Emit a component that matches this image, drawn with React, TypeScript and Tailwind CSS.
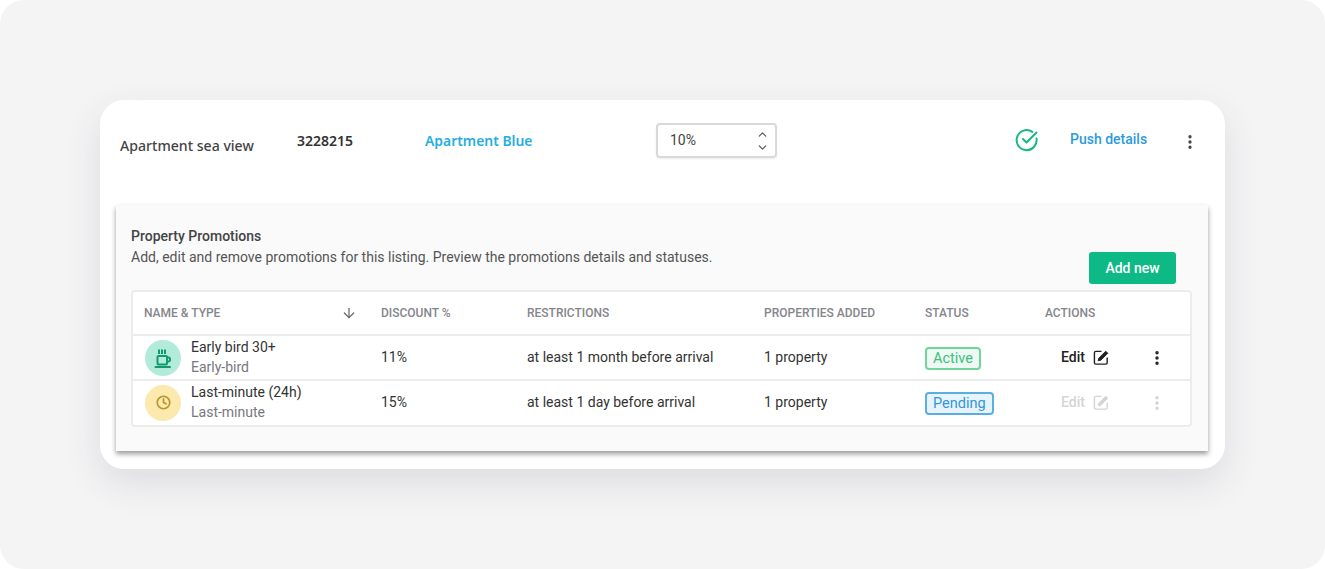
import { ArrowDown, ChevronDown, ChevronUp, Clock, EllipsisVertical } from 'lucide-react';

const COLS = 'grid grid-cols-[248px_146px_237px_161px_120px_1fr] items-center';

interface Promotion {
  name: string;
  type: string;
  discount: string;
  restriction: string;
  properties: string;
  status: string;
  statusClass: string;
  iconClass: string;
  icon: React.ReactNode;
  disabled: boolean;
}

function CoffeeIcon() {
  return (
    <svg viewBox="0 0 24 24" className="h-[24px] w-[24px] fill-none stroke-[#139a6c] stroke-2">
      <path d="M8 3.500v4.500M11 3.500v4.500M14 3.500v4.500" />
      <rect x="6.500" y="10" width="9.500" height="8.500" rx="1" />
      <path d="M16 11.500h1.500a1.500 1.500 0 0 1 1.500 1.500v1a1.500 1.500 0 0 1-1.500 1.500H16" />
      <path d="M4.500 21h14.500" strokeLinecap="round" />
    </svg>
  );
}

function EditIcon() {
  return (
    <svg viewBox="0 0 18 18" className="h-[17px] w-[17px] fill-none stroke-current">
      <path d="M9 2.500H3a1.500 1.500 0 0 0-1.500 1.500v10.500A1.500 1.500 0 0 0 3 16h10.500a1.500 1.500 0 0 0 1.500-1.500V9" strokeWidth="1.500" />
      <path d="M5.500 12.500l.6-2.800 7.400-7.400 2.200 2.200-7.400 7.400z" fill="currentColor" strokeWidth="1" strokeLinejoin="round" />
    </svg>
  );
}

const promotions: Promotion[] = [
  {
    name: 'Early bird 30+',
    type: 'Early-bird',
    discount: '11%',
    restriction: 'at least 1 month before arrival',
    properties: '1 property',
    status: 'Active',
    statusClass: 'border-[#6fd69b] bg-[#edf9f2] text-[#3cc07c]',
    iconClass: 'bg-[#b2ebda]',
    icon: <CoffeeIcon />,
    disabled: false,
  },
  {
    name: 'Last-minute (24h)',
    type: 'Last-minute',
    discount: '15%',
    restriction: 'at least 1 day before arrival',
    properties: '1 property',
    status: 'Pending',
    statusClass: 'border-[#5aaee3] bg-[#e8f4fc] text-[#2f96dc]',
    iconClass: 'bg-[#fbe9ad]',
    icon: <Clock size={15} strokeWidth={2.7} className="text-[#b8962a]" />,
    disabled: true,
  },
];

function PromotionRow({ item }: { item: Promotion }) {
  const actionColor = item.disabled ? 'text-[#d4d4d4]' : 'text-[#222222]';
  return (
    <div className={`${COLS} h-[45px] border-t-2 border-[#ececec] text-[14px] text-[#333333]`}>
      <div className="flex items-center pl-[12px]">
        <div className={`flex h-[36px] w-[36px] items-center justify-center rounded-full ${item.iconClass}`}>
          {item.icon}
        </div>
        <div className="-mt-[2px] ml-[10px] leading-[20px]">
          <div className="text-[#333333]">{item.name}</div>
          <div className="text-[#77777f]">{item.type}</div>
        </div>
      </div>
      <div>{item.discount}</div>
      <div>{item.restriction}</div>
      <div>{item.properties}</div>
      <div>
        <span className={`mt-[1px] inline-block h-[23px] rounded-[4px] border-2 px-[6px] text-[14.5px] leading-[19px] ${item.statusClass}`}>
          {item.status}
        </span>
      </div>
      <div className={`flex items-center pl-[16px] ${actionColor}`}>
        <span className="w-[32px] font-medium">Edit</span>
        <EditIcon />
        <EllipsisVertical size={18} strokeWidth={2.6} className="ml-[38px]" />
      </div>
    </div>
  );
}

export default function App() {
  return (
    <div className="h-[569px] w-[1325px] overflow-hidden bg-white font-['Roboto',sans-serif]">
      <div className="h-full rounded-[24px] bg-[#f4f4f5] pl-[100px] pt-[100px]">
        <div className="h-[369px] w-[1125px] rounded-[24px] bg-white px-[16px] shadow-[0_14px_36px_rgba(60,60,70,0.12)]">
          <div className="flex h-[105px] items-start font-['Noto_Sans',sans-serif] text-[14px]">
            <div className="ml-[4px] mt-[35px] w-[177px] text-[14.1px] font-medium text-[#444444]">Apartment sea view</div>
            <div className="mt-[30px] w-[128px] font-semibold text-[#333333]">3228215</div>
            <div className="mt-[31px] w-[231px] text-[13.9px] font-semibold text-[#25aede]">Apartment Blue</div>
            <div className="mt-[23px] flex h-[35px] w-[121px] items-center justify-between rounded-[4px] border-2 border-[#d9d9d9] pl-[12px] pr-[6px] font-['Roboto',sans-serif] text-[#444444] shadow-[0_1px_2px_rgba(0,0,0,0.08)]">
              <span>10%</span>
              <div className="flex flex-col items-center text-[#555555]">
                <ChevronUp size={13} strokeWidth={2.2} />
                <ChevronDown size={13} strokeWidth={2.2} />
              </div>
            </div>
            <svg viewBox="0 0 24 24" className="ml-[238px] mt-[28px] h-[24px] w-[24px] fill-none stroke-[#14b883] stroke-2">
              <path d="M21.500 10.500a10 10 0 1 1-4.200-6.600" strokeLinecap="round" />
              <path d="M8 11l3.500 3.500L21.500 4.500" strokeLinecap="round" strokeLinejoin="round" />
            </svg>
            <div className="ml-[31px] mt-[29px] font-['Roboto',sans-serif] font-medium text-[#2d9ade]">Push details</div>
            <EllipsisVertical size={18} strokeWidth={2.4} className="ml-[34px] mt-[33px] text-[#444444]" />
          </div>

          <div className="h-[246px] w-[1092px] bg-[#fafafa] pl-[15px] pr-[16px] pt-[21px] shadow-[0_3px_5px_rgba(0,0,0,0.4)]">
            <div className="flex h-[64px] items-start justify-between text-[14px] leading-[21px]">
              <div>
                <div className="font-medium text-[#444444]">Property Promotions</div>
                <div className="text-[#555555]">
                  Add, edit and remove promotions for this listing. Preview the promotions details and statuses.
                </div>
              </div>
              <button className="mr-[16px] mt-[26px] h-[32px] w-[87px] rounded-[3px] bg-[#0dba85] font-medium text-white">
                Add new
              </button>
            </div>
            <div className="h-[137px] w-[1061px] rounded-[4px] border-2 border-[#ececec] bg-white">
              <div className={`${COLS} h-[42px] text-[12px] font-medium text-[#85858c]`}>
                <div className="flex items-center justify-between pl-[11px] pr-[24px]">
                  <span>NAME &amp; TYPE</span>
                  <ArrowDown size={16} strokeWidth={1.8} className="text-[#666666]" />
                </div>
                <div>DISCOUNT %</div>
                <div>RESTRICTIONS</div>
                <div>PROPERTIES ADDED</div>
                <div>STATUS</div>
                <div>ACTIONS</div>
              </div>
              {promotions.map((item) => (
                <PromotionRow key={item.name} item={item} />
              ))}
            </div>
          </div>
        </div>
      </div>
    </div>
  );
}
